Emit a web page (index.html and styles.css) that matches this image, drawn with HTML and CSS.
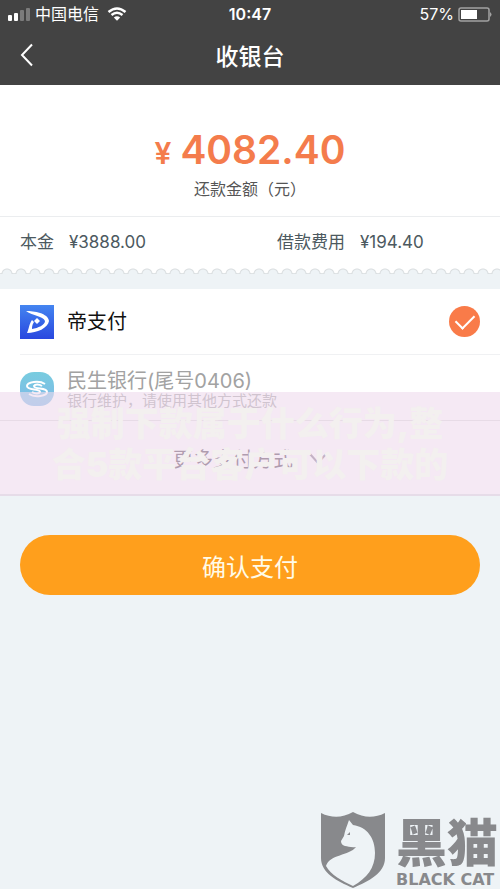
FILE: index.html
```html
<!DOCTYPE html>
<html lang="zh-CN">
<head>
<meta charset="UTF-8">
<meta name="viewport" content="width=device-width, initial-scale=1.0">
<title>收银台</title>
<link rel="stylesheet" href="styles.css">
</head>
<body>

<header>
  <div class="status-bar">
    <div class="status-left">
      <svg width="23" height="13" viewBox="0 0 23 13" fill="#fff">
        <rect x="0" y="7" width="4" height="6" rx="1"/>
        <rect x="6" y="5" width="4" height="8" rx="1"/>
        <rect x="12" y="2" width="4" height="11" rx="1" opacity=".3"/>
        <rect x="18" y="0" width="4" height="13" rx="1" opacity=".3"/>
      </svg>
      <span>中国电信</span>
      <svg class="wifi" width="20" height="14" viewBox="0 0 20 14">
        <path d="M1.500 5Q10-2 18.500 5M4.500 8Q10 3.500 15.500 8" fill="none" stroke="#fff" stroke-width="2.500"/>
        <path d="M6.800 10.500Q10 8 13.200 10.500L10 13.800Z" fill="#fff"/>
      </svg>
    </div>
    <span class="time">10:47</span>
    <div class="status-right">
      <span>57%</span>
      <svg width="34" height="15" viewBox="0 0 34 15">
        <rect x="1" y="1" width="30" height="13" rx="2" fill="none" stroke="#a2a2a2" stroke-width="1.500"/>
        <rect x="3" y="3" width="16" height="9" fill="#fff"/>
        <path d="M32 5Q35 7.500 32 10Z" fill="#a2a2a2"/>
      </svg>
    </div>
  </div>
  <nav>
    <a class="back" href="#" aria-label="返回">
      <svg width="14" height="24" viewBox="0 0 14 24"><path d="M12 1.500L2 12L12 22.500" fill="none" stroke="#fff" stroke-width="2"/></svg>
    </a>
    <h1>收银台</h1>
  </nav>
</header>

<main>
  <section class="bill">
    <div class="amount">
      <p class="total"><span class="yen">¥</span>4082.40</p>
      <p class="caption">还款金额（元）</p>
    </div>
    <div class="details">
      <p><span>本金</span><span>¥3888.00</span></p>
      <p><span>借款费用</span><span>¥194.40</span></p>
    </div>
    <div class="scallop"></div>
  </section>

  <form>
    <div class="methods">
      <label class="method">
        <svg class="logo" width="34" height="34" viewBox="0 0 34 34">
          <defs>
            <linearGradient id="blue" x1="0" y1="0" x2="0" y2="1">
              <stop offset="0" stop-color="#4485f0"/>
              <stop offset="1" stop-color="#2947df"/>
            </linearGradient>
          </defs>
          <rect width="34" height="34" fill="url(#blue)"/>
          <path d="M6 6C14 6 28 8 29 16C28 23 17 28 7 28C9 24 9 19 12 15L14 17C12 20 12 22 12 24C18 23 25 20 25 16C23 11 13 11 6 6Z" fill="#fff"/>
          <path d="M17 13L20 16L17 19L14 16Z" fill="#fff"/>
        </svg>
        <span class="name">帝支付</span>
        <input type="radio" name="method" checked>
      </label>
      <label class="method disabled">
        <svg class="logo" width="34" height="34" viewBox="0 0 34 34">
          <defs>
            <linearGradient id="sky" x1="0" y1="0" x2="0" y2="1">
              <stop offset="0" stop-color="#78ccdf"/>
              <stop offset="1" stop-color="#7eb9e8"/>
            </linearGradient>
          </defs>
          <rect width="34" height="34" rx="14" fill="url(#sky)"/>
          <g fill="none" stroke="#fff" stroke-width="2">
            <path d="M25 12C19 8 7 10 7 14C7 19 20 16 20 20C19 22 15 22 12 20"/>
            <path d="M9 22C15 26 27 24 27 20C27 15 14 18 14 14C15 12 19 12 22 14"/>
          </g>
        </svg>
        <span class="name">民生银行(尾号0406)<small>银行维护，请使用其他方式还款</small></span>
        <input type="radio" name="method" disabled>
      </label>
      <button type="button" class="more">
        更多支付方式
        <svg width="18" height="12" viewBox="0 0 18 12"><path d="M1 1L9 10L17 1" fill="none" stroke="#85778a" stroke-width="2"/></svg>
      </button>
      <p class="banner">强制下款属于什么行为,整<br>合5款平台客户可以下款的</p>
    </div>
    <button type="submit" class="confirm">确认支付</button>
  </form>
</main>

<footer>
  <svg width="66" height="78" viewBox="0 0 66 78">
    <path d="M1 2Q17 10 33 1Q49 10 65 2V47C65 62 49 70 33 77C17 70 1 62 1 47Z" fill="#88898c"/>
    <path d="M29 9L33 14C47 16 55 27 55 42C55 57 47 67 33 75C22 70 11 64 6 55C10 43 29 45 36 36C31 37 28 35 25 35Q21 34 21 30L24 25C25 19 27 15 29 9Z" fill="#eef3f6"/>
    <path d="M27 24L30 21V24Z" fill="#88898c"/>
  </svg>
  <div class="brand">
    <p class="brand-name">黑猫</p>
    <p class="brand-en">BLACK CAT</p>
  </div>
</footer>

</body>
</html>
```
FILE: styles.css
```css
* {
  box-sizing: border-box;
}
body {
  display: flex;
  flex-direction: column;
  min-height: 100vh;
  margin: 0;
  background-color: #eef3f6;
  color: #4c5960;
  font-family: Inter, "Noto Sans CJK SC", sans-serif;
  font-size: 16px;
}
h1, p {
  margin: 0;
}
svg {
  display: block;
}
button {
  border: 0;
  font-family: inherit;
}

header {
  background-color: #434343;
  color: #fff;
}
.status-bar {
  display: grid;
  grid-template-columns: 1fr auto 1fr;
  align-items: center;
  height: 28px;
  padding: 0 8px;
  line-height: 28px;
}
.status-left, .status-right {
  display: flex;
  align-items: center;
  gap: 4px;
}
.wifi {
  margin-left: 4px;
}
.status-right {
  justify-content: flex-end;
}
.time {
  font-weight: 600;
}
nav {
  display: grid;
  grid-template-columns: 1fr auto 1fr;
  align-items: center;
  height: 57px;
  padding: 0 20px 4px;
}
h1 {
  font-size: 23px;
  font-weight: 500;
}

.bill {
  background-color: #fff;
}
.amount {
  padding: 41px 20px 12px;
  border-bottom: 1px solid #ebedef;
  text-align: center;
}
.total {
  color: #f47c4c;
  font-size: 39px;
  font-weight: 600;
  line-height: 48px;
}
.yen {
  margin-right: 9px;
  font-size: 30px;
  line-height: 28px;
}
.caption {
  color: #555;
  line-height: 30px;
}
.details {
  display: grid;
  grid-template-columns: 257px 1fr;
  padding: 0 20px;
  line-height: 50px;
}
.details p {
  display: flex;
  gap: 15px;
  font-size: 17px;
}
.scallop {
  height: 7px;
  background:
    radial-gradient(circle at 7px 7px, #eef3f6 4px, #d9dddf 5px, transparent 6px) 0 0 / 14px 7px repeat-x,
    linear-gradient(to top, #dfe3e5 1px, transparent 1px);
}

.methods {
  position: relative;
  margin-top: 15px;
  background-color: #fff;
}
.method {
  display: flex;
  align-items: center;
  gap: 13px;
  height: 66px;
  margin-left: 20px;
  padding-right: 20px;
  border-bottom: 1px solid #f0f1f3;
}
.name {
  flex: 1;
  color: #111;
  font-size: 20px;
  line-height: 24px;
}
.name small {
  display: block;
  font-size: 15px;
  line-height: 16px;
}
.method input {
  width: 31px;
  height: 31px;
  margin: 0;
  border-radius: 50%;
  appearance: none;
}
.method input:checked {
  display: grid;
  place-items: center;
  background-color: #f97b49;
}
.method input:checked::after {
  content: "";
  width: 16px;
  height: 9px;
  margin-bottom: 5px;
  border: solid #fff;
  border-width: 0 0 2px 2px;
  transform: rotate(-45deg);
}
.method input:disabled {
  display: none;
}
.disabled {
  margin-left: 0;
  padding: 2px 20px 0;
  border-color: #ddd;
}
.disabled .name {
  color: #a2a2a2;
}
.more {
  display: flex;
  justify-content: center;
  align-items: center;
  gap: 16px;
  width: 100%;
  height: 75px;
  background-color: transparent;
  color: #503f50;
  font-size: 20px;
}
.banner {
  position: absolute;
  right: 0;
  bottom: 0;
  left: 0;
  padding: 11px 0 9px;
  border-bottom: 2px solid #e6dce8;
  background-color: rgba(238, 218, 237, 0.6);
  color: #f3f0ef;
  font-size: 34px;
  font-weight: 900;
  line-height: 41px;
  text-align: center;
}
.confirm {
  display: block;
  width: calc(100% - 40px);
  height: 60px;
  margin: 39px 20px 20px;
  border-radius: 30px;
  background-color: #ff9f1c;
  color: #fffbe8;
  font-size: 24px;
}

footer {
  display: flex;
  justify-content: flex-end;
  align-items: flex-end;
  gap: 10px;
  margin-top: auto;
  padding-right: 2px;
}
.brand {
  color: #88898c;
  font-weight: 900;
}
.brand-name {
  font-size: 51px;
  line-height: 54px;
}
.brand-en {
  font-family: "DejaVu Sans", sans-serif;
  font-size: 16px;
  line-height: 18px;
}
```
